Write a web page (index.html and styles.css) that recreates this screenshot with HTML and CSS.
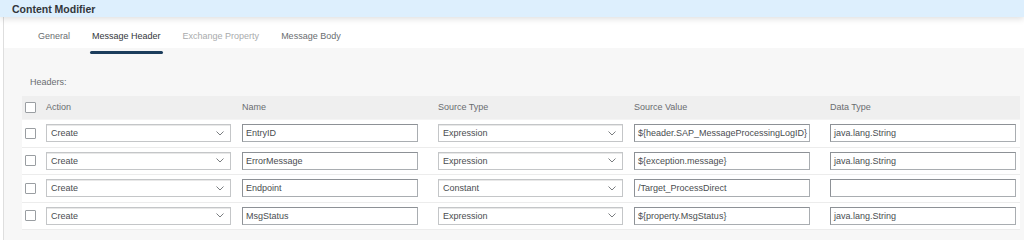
FILE: index.html
```html
<!DOCTYPE html>
<html lang="en">
<head>
  <meta charset="UTF-8">
  <title>Content Modifier</title>
  <link rel="stylesheet" href="styles.css">
</head>
<body>
  <header class="titlebar">Content Modifier</header>

  <div class="panel">
    <nav class="tabs">
      <span class="tab">General</span>
      <span class="tab active">Message Header</span>
      <span class="tab disabled">Exchange Property</span>
      <span class="tab">Message Body</span>
    </nav>

    <section class="content">
      <div class="section-label">Headers:</div>

      <div class="grid">
        <div class="row head">
          <div class="cell check"><span class="box"></span></div>
          <div class="cell">Action</div>
          <div class="cell">Name</div>
          <div class="cell">Source Type</div>
          <div class="cell">Source Value</div>
          <div class="cell">Data Type</div>
        </div>

        <div class="row">
          <div class="cell check"><span class="box"></span></div>
          <div class="cell"><div class="select">Create<svg viewBox="0 0 8 5"><polyline points="0.5,0.5 4,4 7.5,0.5"/></svg></div></div>
          <div class="cell"><div class="input">EntryID</div></div>
          <div class="cell"><div class="select">Expression<svg viewBox="0 0 8 5"><polyline points="0.5,0.5 4,4 7.5,0.5"/></svg></div></div>
          <div class="cell"><div class="input">${header.SAP_MessageProcessingLogID}</div></div>
          <div class="cell"><div class="input last">java.lang.String</div></div>
        </div>

        <div class="row">
          <div class="cell check"><span class="box"></span></div>
          <div class="cell"><div class="select">Create<svg viewBox="0 0 8 5"><polyline points="0.5,0.5 4,4 7.5,0.5"/></svg></div></div>
          <div class="cell"><div class="input">ErrorMessage</div></div>
          <div class="cell"><div class="select">Expression<svg viewBox="0 0 8 5"><polyline points="0.5,0.5 4,4 7.5,0.5"/></svg></div></div>
          <div class="cell"><div class="input">${exception.message}</div></div>
          <div class="cell"><div class="input last">java.lang.String</div></div>
        </div>

        <div class="row">
          <div class="cell check"><span class="box"></span></div>
          <div class="cell"><div class="select">Create<svg viewBox="0 0 8 5"><polyline points="0.5,0.5 4,4 7.5,0.5"/></svg></div></div>
          <div class="cell"><div class="input">Endpoint</div></div>
          <div class="cell"><div class="select">Constant<svg viewBox="0 0 8 5"><polyline points="0.5,0.5 4,4 7.5,0.5"/></svg></div></div>
          <div class="cell"><div class="input">/Target_ProcessDirect</div></div>
          <div class="cell"><div class="input last"></div></div>
        </div>

        <div class="row">
          <div class="cell check"><span class="box"></span></div>
          <div class="cell"><div class="select">Create<svg viewBox="0 0 8 5"><polyline points="0.5,0.5 4,4 7.5,0.5"/></svg></div></div>
          <div class="cell"><div class="input">MsgStatus</div></div>
          <div class="cell"><div class="select">Expression<svg viewBox="0 0 8 5"><polyline points="0.5,0.5 4,4 7.5,0.5"/></svg></div></div>
          <div class="cell"><div class="input">${property.MsgStatus}</div></div>
          <div class="cell"><div class="input last">java.lang.String</div></div>
        </div>
      </div>
    </section>
  </div>
</body>
</html>
```

FILE: styles.css
```css
/* Base */
* { box-sizing: border-box; margin: 0; padding: 0; }
html, body { height: 100%; }
body {
  font-family: "Liberation Sans", Arial, sans-serif;
  font-size: 9px;
  color: #4a4d50;
  background: #fff;
  display: flex;
  flex-direction: column;
  overflow: hidden;
}

/* Title bar */
.titlebar {
  position: relative;
  z-index: 2;
  height: 17px;
  line-height: 18px;
  padding-left: 12px;
  font-size: 10.5px;
  font-weight: bold;
  color: #32363a;
  background: #ddeffd;
  box-shadow: 0 2px 6px rgba(0,0,0,0.13);
}

/* Panel */
.panel {
  flex: 1;
  margin-left: 3px;
  border-left: 1px solid #dedede;
  display: flex;
  flex-direction: column;
}

/* Tabs */
.tabs {
  height: 31px;
  display: flex;
  align-items: center;
  padding-left: 23px;
  padding-top: 6px;
  background: #fff;
}
.tab {
  position: relative;
  margin: 0 9px;
  padding: 0 2px;
  color: #6a6d70;
}
.tab.active { color: #32363a; }
.tab.active::after {
  content: "";
  position: absolute;
  left: 0;
  right: 0;
  bottom: -13px;
  height: 3px;
  border-radius: 2px;
  background: #1c3d5c;
  z-index: 1;
}
.tab.disabled { color: #a9abad; }

/* Content */
.content {
  flex: 1;
  background: #f7f7f7;
  padding: 28px 4px 0 18px;
}
.section-label {
  padding-left: 8px;
  height: 12px;
  line-height: 12px;
  color: #6a6d70;
  margin-bottom: 8px;
}

/* Header grid */
.row {
  display: grid;
  grid-template-columns: 24px 196px 196px 196px 196px 1fr;
  align-items: center;
  height: 27.5px;
  background: #fff;
  border-bottom: 1px solid #ececec;
}
.row.head {
  height: 24px;
  padding-bottom: 1px;
  background: #efefef;
  border-bottom: 1px solid #f4f4f4;
  color: #6a6d70;
}
.cell { padding: 0; }
.check { padding-left: 3px; display: flex; align-items: center; }
.box {
  width: 11px;
  height: 11px;
  border: 1px solid #9a9ea2;
  border-radius: 1px;
  background: #fff;
}

/* Fields */
.select, .input {
  height: 18px;
  line-height: 16px;
  padding: 0 4px;
  background: #fff;
  white-space: nowrap;
  overflow: hidden;
}
.select {
  width: 185px;
  display: flex;
  align-items: center;
  justify-content: space-between;
  padding-right: 6px;
  border: 1px solid #c4c6c8;
  box-shadow: inset 0 1px 0 #e8e8e8;
}
.select svg {
  width: 8px;
  height: 5px;
  fill: none;
  stroke: #7a7d80;
  stroke-width: 1;
}
.input {
  width: 176px;
  padding-left: 3px;
  border: 1px solid #a9adb1;
  border-top-color: #8d9196;
  border-left-color: #8d9196;
}
.input.last { width: 186px; }
```
